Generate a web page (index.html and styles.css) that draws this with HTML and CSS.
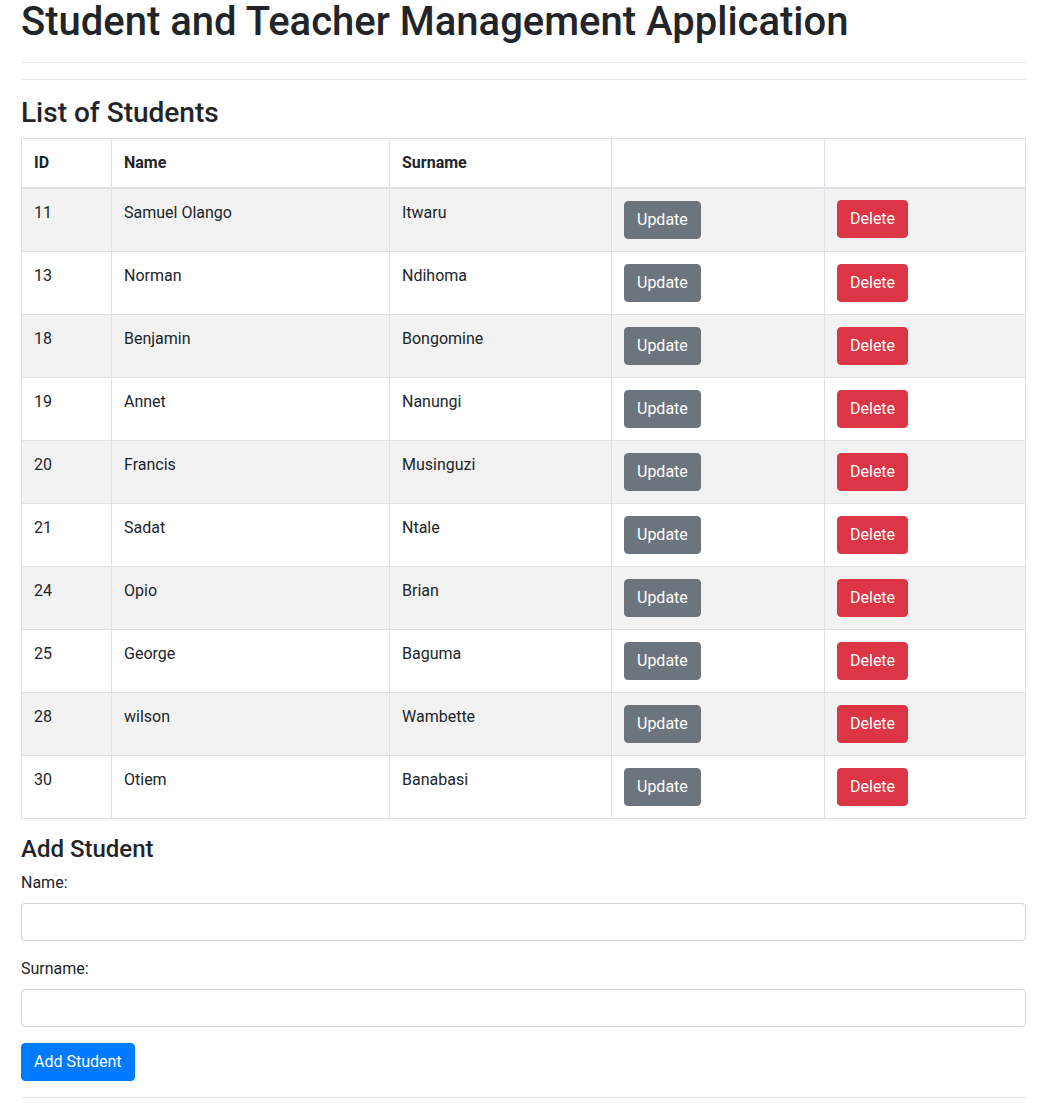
FILE: index.html
```html
<!DOCTYPE html>
<html lang="en">
<head>
<meta charset="utf-8">
<title>Student and Teacher Management Application</title>
<link rel="stylesheet" href="styles.css">
</head>
<body>
<div class="page">
  <h1 class="title">Student and Teacher Management Application</h1>
  <hr class="rule">
  <hr class="rule">
  <h3 class="section-title">List of Students</h3>
  <table class="grid">
    <colgroup>
      <col class="c-id"><col class="c-name"><col class="c-surname"><col class="c-update"><col class="c-delete">
    </colgroup>
    <thead>
      <tr><th>ID</th><th>Name</th><th>Surname</th><th></th><th></th></tr>
    </thead>
    <tbody>
      <tr><td>11</td><td>Samuel Olango</td><td>Itwaru</td><td><a class="btn btn-update">Update</a></td><td><button class="btn btn-delete">Delete</button></td></tr>
      <tr><td>13</td><td>Norman</td><td>Ndihoma</td><td><a class="btn btn-update">Update</a></td><td><button class="btn btn-delete">Delete</button></td></tr>
      <tr><td>18</td><td>Benjamin</td><td>Bongomine</td><td><a class="btn btn-update">Update</a></td><td><button class="btn btn-delete">Delete</button></td></tr>
      <tr><td>19</td><td>Annet</td><td>Nanungi</td><td><a class="btn btn-update">Update</a></td><td><button class="btn btn-delete">Delete</button></td></tr>
      <tr><td>20</td><td>Francis</td><td>Musinguzi</td><td><a class="btn btn-update">Update</a></td><td><button class="btn btn-delete">Delete</button></td></tr>
      <tr><td>21</td><td>Sadat</td><td>Ntale</td><td><a class="btn btn-update">Update</a></td><td><button class="btn btn-delete">Delete</button></td></tr>
      <tr><td>24</td><td>Opio</td><td>Brian</td><td><a class="btn btn-update">Update</a></td><td><button class="btn btn-delete">Delete</button></td></tr>
      <tr><td>25</td><td>George</td><td>Baguma</td><td><a class="btn btn-update">Update</a></td><td><button class="btn btn-delete">Delete</button></td></tr>
      <tr><td>28</td><td>wilson</td><td>Wambette</td><td><a class="btn btn-update">Update</a></td><td><button class="btn btn-delete">Delete</button></td></tr>
      <tr><td>30</td><td>Otiem</td><td>Banabasi</td><td><a class="btn btn-update">Update</a></td><td><button class="btn btn-delete">Delete</button></td></tr>
    </tbody>
  </table>
  <h4 class="form-title">Add Student</h4>
  <form class="add-form">
    <div class="form-group">
      <label class="field-label" for="name">Name:</label>
      <input class="field" id="name" type="text">
    </div>
    <div class="form-group">
      <label class="field-label" for="surname">Surname:</label>
      <input class="field" id="surname" type="text">
    </div>
    <button type="button" class="btn btn-primary">Add Student</button>
  </form>
  <hr class="rule">
</div>
</body>
</html>
```

FILE: styles.css
```css
* { box-sizing: border-box; }
html, body { margin: 0; padding: 0; }
body {
  font-family: Roboto, "Liberation Sans", sans-serif;
  font-size: 16px;
  line-height: 1.5;
  color: #212529;
  background: #fff;
}
.page {
  padding: 0 13px 0 21px;
}
.title {
  font-size: 40px;
  font-weight: 500;
  line-height: 1.2;
  margin: -2px 0 8px;
}
.rule {
  margin: 16px 0;
  border: 0;
  border-top: 1px solid rgba(0,0,0,.1);
  height: 0;
}
.section-title {
  font-size: 28px;
  font-weight: 500;
  line-height: 1.2;
  margin: 0 0 8px;
}
.grid {
  width: 100%;
  border-collapse: collapse;
  table-layout: fixed;
  margin-bottom: 16px;
}
.c-id { width: 90px; }
.c-name { width: 278px; }
.c-surname { width: 222px; }
.c-update { width: 213px; }
.grid th, .grid td {
  padding: 12px;
  border: 1px solid #dee2e6;
  text-align: left;
  vertical-align: top;
}
.grid thead th {
  font-weight: 700;
  border-bottom: 2px solid #dee2e6;
}
.grid tbody tr:nth-of-type(odd) { background: rgba(0,0,0,.05); }
.btn {
  display: inline-block;
  font-family: inherit;
  font-size: 16px;
  font-weight: 400;
  line-height: 1.5;
  padding: 6px 12px;
  border: 1px solid transparent;
  border-radius: 4px;
  color: #fff;
  text-align: center;
  vertical-align: top;
  cursor: pointer;
  text-decoration: none;
}
.btn-update {
  background: #6c757d;
  border-color: #6c757d;
}
.btn-delete {
  background: #dc3545;
  border-color: #dc3545;
}
.grid tbody tr:first-child .btn-delete {
  margin-top: -1px;
}
.btn-primary {
  background: #007bff;
  border-color: #007bff;
}
.form-title {
  font-size: 24px;
  font-weight: 500;
  line-height: 1.2;
  margin: 0 0 8px;
}
.add-form { margin: 0; }
.form-group { margin-bottom: 16px; }
.field-label {
  display: inline-block;
  margin-bottom: 8px;
}
.field {
  display: block;
  width: 100%;
  height: 38px;
  padding: 6px 12px;
  font-family: inherit;
  font-size: 16px;
  line-height: 1.5;
  color: #495057;
  background: #fff;
  border: 1px solid #ced4da;
  border-radius: 4px;
}
```
